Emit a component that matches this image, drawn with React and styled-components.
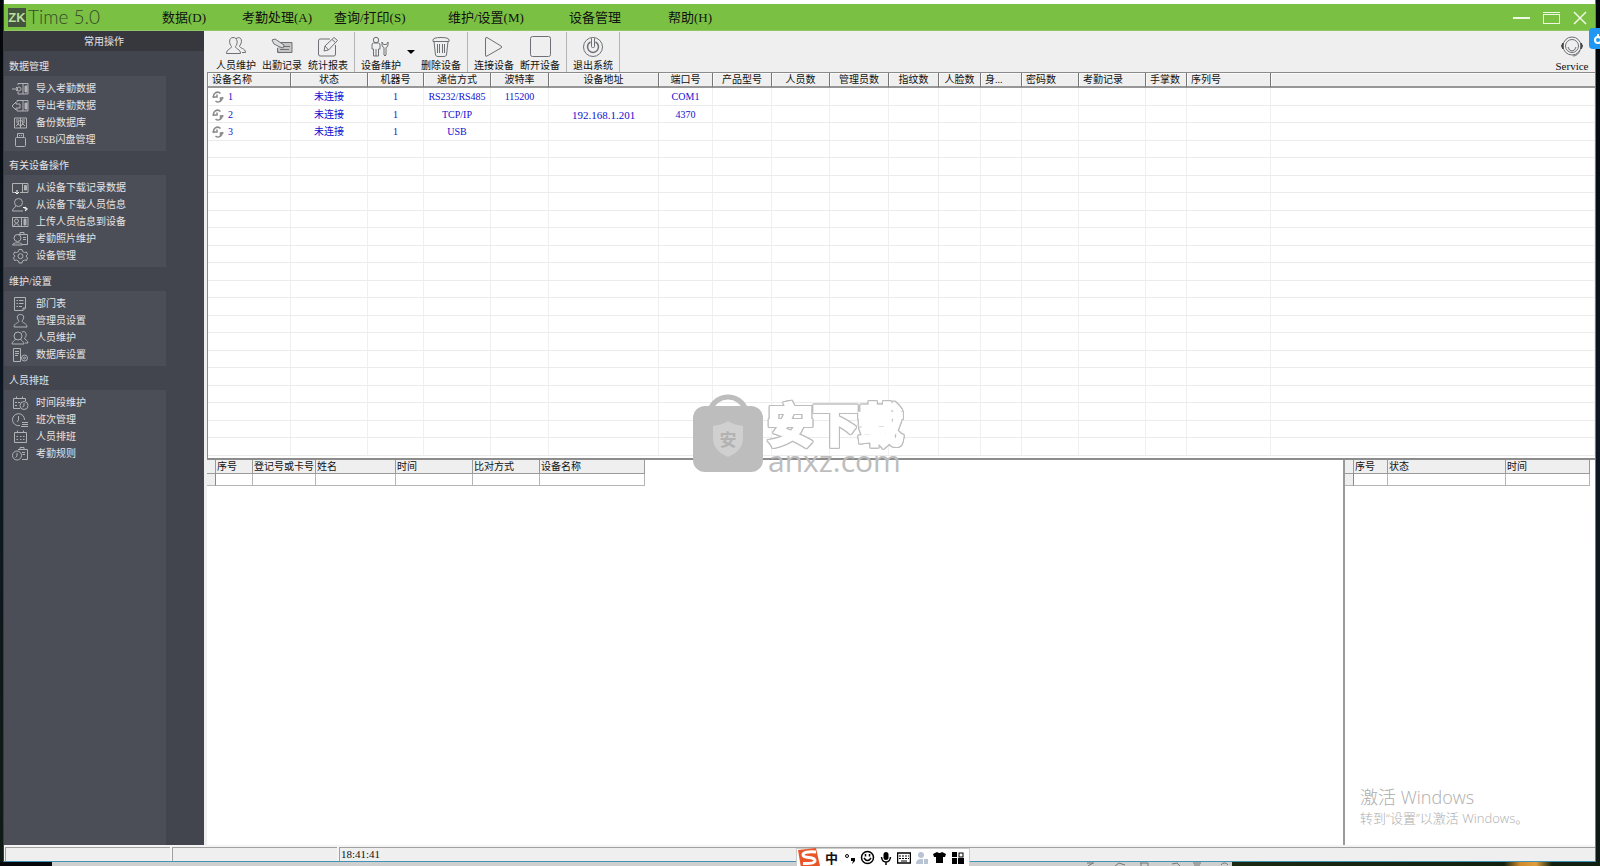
import React from 'react';
import styled, { createGlobalStyle } from 'styled-components';

const GlobalStyle = createGlobalStyle`
  *, *::before, *::after { box-sizing: border-box; }
  body {
    margin: 0;
    font: 10px/12px "Liberation Serif", "Noto Sans CJK SC", serif;
    color: #111;
    background: #06090f;
  }
  button { font: inherit; color: inherit; background: none; border: 0; padding: 0; margin: 0; white-space: nowrap; }
  table { border-collapse: separate; border-spacing: 0; table-layout: fixed; }
  th { font-weight: normal; }
  h1, h2, ul { margin: 0; padding: 0; font: inherit; list-style: none; }
`;

/* ---------- shell ---------- */

const Desktop = styled.div`
  position: relative;
  display: flex;
  flex-direction: column;
  height: 100vh;
  overflow: hidden;
  background: linear-gradient(#03060a, #0d1722 50%, #101a14);
`;

const Window = styled.div`
  flex: 1;
  min-height: 0;
  margin: 0 4px 0 3px;
  display: flex;
  flex-direction: column;
  background: #fff;
  border-left: 1px solid #1d3f6e;
  border-right: 1px solid #4a86a8;
  border-bottom: 1px solid #3f93b5;
  padding-top: 4px;
`;

const TitleBar = styled.header`
  flex: none;
  display: flex;
  align-items: center;
  height: 27px;
  background: #7ac143;
  border-bottom: 1px solid #8fc767;
`;

const Brand = styled.h1`
  display: flex;
  align-items: center;
  width: 158px;
  padding-left: 4px;
  gap: 2px;
`;

const BrandMark = styled.span`
  width: 18px;
  height: 19px;
  background: #43533d;
  color: #b9dd9b;
  font: 700 13px/19px "Liberation Sans", sans-serif;
  text-align: center;
`;

const BrandName = styled.span`
  font: 300 19px/24px Lato, sans-serif;
  color: #34492a;
`;

const Menu = styled.nav`
  flex: 1;
  display: grid;
  grid-template-columns: 80px 92px 114px 121px 99px 60px;
  justify-items: start;
  padding-top: 2px;
  font-size: 13px;
  line-height: 20px;
`;

const WindowControls = styled.div`
  display: flex;
  align-items: center;
  gap: 13px;
  padding: 1px 8px 0 0;
  button { display: flex; }
`;

const Body = styled.div`
  flex: 1;
  min-height: 0;
  display: flex;
`;

/* ---------- sidebar ---------- */

const Sidebar = styled.aside`
  flex: none;
  width: 200px;
  display: flex;
  flex-direction: column;
  background: #43454e;
  color: #e4e4e6;
`;

const SidebarTitle = styled.h2`
  height: 20px;
  line-height: 21px;
  text-align: center;
  background: #37383e;
  margin-bottom: 1px;
`;

const GroupTitle = styled.h2`
  height: 24px;
  line-height: 20px;
  padding: 5px 0 0 5px;
`;

const GroupList = styled.ul`
  flex: ${(p) => (p.$fill ? '1' : 'none')};
  width: 162px;
  padding: 4px 0 3px 7px;
  background: #4c4e57;
`;

const SideItem = styled.button`
  display: flex;
  align-items: center;
  gap: 7px;
  height: 17px;
  line-height: 17px;
`;

/* ---------- toolbar ---------- */

const Content = styled.main`
  flex: 1;
  min-width: 0;
  display: flex;
  flex-direction: column;
`;

const Toolbar = styled.div`
  flex: none;
  display: flex;
  height: 41px;
  padding: 0 0 0 9px;
  background: #efefef;
`;

const ToolButton = styled.button`
  display: flex;
  flex-direction: column;
  align-items: center;
  gap: 2px;
  width: 46px;
  padding-top: 5px;
  margin-left: ${(p) => (p.$end ? 'auto' : '0')};
  font-size: ${(p) => (p.$end ? '11px' : '10px')};
`;

const DropButton = styled.button`
  width: 14px;
  display: flex;
  align-items: center;
  justify-content: center;
`;

const Separator = styled.span`
  width: 1px;
  margin: 1px 3px 0 3px;
  background: #b4b4b4;
`;

/* ---------- tables ---------- */

const Panes = styled.div`
  flex: 1;
  min-height: 0;
  display: flex;
  flex-direction: column;
  border-left: 3px solid #efefef;
`;

const DevicePane = styled.section`
  flex: none;
  border-top: 1px solid #8a8a8a;
  border-left: 1px solid #8a8a8a;
  border-bottom: 2px solid #8c8c8c;
  padding-bottom: 2px;
`;

const DeviceTable = styled.table`
  width: 100%;
`;

const DeviceHead = styled.th`
  height: 15px;
  padding: 1px 4px 0;
  overflow: hidden;
  white-space: nowrap;
  text-align: ${(p) => (p.$left ? 'left' : 'center')};
  background: #efefef;
  border-right: ${(p) => (p.$last ? '0' : '1px solid #777')};
  border-bottom: 2px solid #979797;
  box-shadow: inset 1px 1px #fafafa;
`;

const DeviceRow = styled.tr`
  height: 18px;
  &:nth-child(even) { height: 17px; }
`;

const DeviceCell = styled.td`
  padding: 1px 4px 0;
  white-space: nowrap;
  text-align: center;
  font-size: ${(p) => (p.$address ? '11px' : '10px')};
  color: #1010d0;
  border-right: 1px solid #f0f0f0;
  border-bottom: 1px solid #ececec;
`;

const DeviceName = styled.span`
  display: flex;
  align-items: center;
  gap: 4px;
`;

const LowerPanes = styled.div`
  flex: 1;
  min-height: 0;
  display: flex;
`;

const LogPane = styled.section`
  flex: ${(p) => (p.$width ? `0 0 ${p.$width}px` : '1')};
  min-width: 0;
  border-left: ${(p) => (p.$width ? '2px solid #999' : '0')};
`;

const LogTable = styled.table`
  width: ${(p) => p.$width}px;
  th, td {
    padding: 0 0 0 1px;
    text-align: left;
    white-space: nowrap;
    border-right: 1px solid #b5b5b5;
    border-bottom: 1px solid #b5b5b5;
  }
  th { height: 14px; background: #efefef; border-color: #9a9a9a; }
  td { height: 12px; }
  td:first-child { background: #efefef; border-right-color: #8a8a8a; }
`;

/* ---------- status bar ---------- */

const StatusBar = styled.footer`
  flex: none;
  display: flex;
  gap: 2px;
  height: 16px;
  padding: 2px 0 0 1px;
  background: #f4f4f4;
`;

const StatusCell = styled.div`
  flex: ${(p) => (p.$grow ? '1' : '0 0 165px')};
  padding-left: 1px;
  font-size: 11px;
  line-height: 13px;
  background: #efefef;
  border-top: 1px solid #a0a0a0;
  border-left: 1px solid #a0a0a0;
`;

const Taskbar = styled.div`
  flex: none;
  display: flex;
  justify-content: flex-end;
  align-items: flex-start;
  height: 4px;
  overflow: hidden;
  background: linear-gradient(90deg, #05070a 52px, #cfcfcf 52px, #cfcfcf 77%, #1c2a12 77%, #12200f 94%, #d08a2c 95%, #e0a040 96%, #12200f 97%);
`;

/* ---------- overlays ---------- */

const ImeBar = styled.div`
  position: absolute;
  bottom: 0;
  left: 50%;
  margin-left: -4px;
  display: flex;
  align-items: center;
  gap: 3px;
  height: 18px;
  padding: 0 4px 0 0;
  background: #fff;
  border: 1px solid #ccc;
  border-bottom: 0;
  button { display: flex; width: 15px; justify-content: center; font: 700 13px/16px "Noto Sans CJK SC", sans-serif; }
`;

const EdgeBadge = styled.button`
  position: absolute;
  right: 0;
  top: 28px;
  width: 11px;
  height: 21px;
  background: #2196f3;
  border-radius: 4px 0 0 4px;
  overflow: hidden;
`;

const Watermark = styled.div`
  position: absolute;
  inset: 0;
  display: flex;
  align-items: center;
  justify-content: center;
  gap: 5px;
  padding: 0 4px 4px 0;
  pointer-events: none;
`;

const WatermarkText = styled.div`
  padding-top: 8px;
  color: #bdbdbd;
  font: 400 30px/24px "Open Sans", sans-serif;
`;

const WatermarkTitle = styled.div`
  font: 500 45px/52px "Noto Sans CJK SC", sans-serif;
  color: #fff;
  -webkit-text-stroke: 4px #fff;
  paint-order: stroke fill;
  filter: drop-shadow(1px 0 #bdbdbd) drop-shadow(-1px 0 #bdbdbd) drop-shadow(0 1px #bdbdbd) drop-shadow(0 -1px #bdbdbd);
`;

const Activation = styled.div`
  position: absolute;
  right: 72px;
  bottom: 38px;
  width: 168px;
  color: #adadad;
  font: 300 13px/20px "Open Sans", "Noto Sans CJK SC", sans-serif;
  white-space: nowrap;
  pointer-events: none;
  strong { display: block; font-size: 18px; line-height: 22px; font-weight: 300; }
`;

/* ---------- drawings ---------- */

const sideDrawings = {
  import: <><path d="M7 4V2.500H17V13H7V10.500M1 8H7M5 6L7 8L5 10" /><circle cx="8" cy="8" r="2" /><path d="M12 3V13" /><path d="M14 5H16V11H14Z" fill="currentColor" /></>,
  export: <><path d="M6 4V2.500H17V13H6V11M9 6V10H5V12L1 8L5 4V6Z" /><path d="M12 3V13" /><path d="M14 5H16V11H14Z" fill="currentColor" /></>,
  backup: <><path d="M3.500 3H15.500V13H3.500Z M9.500 3V13" /><path d="M5 5H8M5 7H7M5 11L8 8M11 5H14M12 7H14M11 8L14 11" /><circle cx="9.500" cy="8" r="2.500" /></>,
  usb: <><rect x="4.500" y="5.500" width="10" height="9" rx="1" /><path d="M6.500 5V1.500H12.500V5M8.500 3V4M10.500 3V4" /></>,
  download: <><path d="M4 12.500H1.500V3.500H17V12.500H9M11.500 3V12" /><path d="M13.500 5.500H15.500V10H13.500Z" fill="currentColor" /><path d="M6 10V14M4 12L6 14L8 12" stroke="#fff" /></>,
  userDown: <><circle cx="7.500" cy="5.500" r="4" /><path d="M5 9C4 11 1.500 11 1.500 14H12" /><path d="M12 10.500H14V12H16M14 10L16.500 12L14 14" stroke="#fff" /></>,
  upload: <><path d="M1.500 3.500H17V12.500H1.500ZM10.500 3V13" /><circle cx="5.500" cy="7" r="2" /><path d="M3 12C3 9 8 9 8 12" /><path d="M13 5H15V11H13Z" fill="currentColor" /></>,
  photo: <><path d="M7 3.500H16.500V13.500H11M9 3V1.500H13V3M12 6.500H15M12 8.500H15" /><circle cx="6.500" cy="7" r="3.500" /><path d="M1.500 14C2 11 11 11 11.500 14Z" /></>,
  gear: <><path d="M8 1.500H11L11.500 3.500L13.500 4.500L15.500 4L16.500 6.500L15 8L16.500 10L15.500 12.500L13.500 12L11.500 13L11 15H8L7.500 13L5.500 12L3.500 12.500L2.500 10L4 8L2.500 6.500L3.500 4L5.500 4.500L7.500 3.500Z" /><circle cx="9.500" cy="8.200" r="2.500" /></>,
  list: <path d="M3.500 1.500H14.500V12L12 14.500H3.500ZM12 14.500V12H14.500M5.500 4.500H7M8 4.500H12.500M5.500 7.500H7M8 7.500H12.500M5.500 10.500H7M8 10.500H11" />,
  admin: <path d="M9.500 1.500C5 1.500 6 6 8 8C8 10 3 10 3 14H16C16 10 11 10 11 8C13 6 14 1.500 9.500 1.500Z" />,
  users: <><circle cx="7" cy="6" r="4" /><path d="M4.500 9C4 11 1 11 1 14H13C13 11 10 11 9.500 9M11 2C16 0 16 7 13.500 8C13.500 10 17 10 17 13H14" /></>,
  server: <><path d="M2.500 1.500H9.500V14.500H2.500ZM4 4.500H8M4 6.500H8M4 8.500H7" /><circle cx="13.500" cy="11" r="3" /><circle cx="13.500" cy="11" r="1" /></>,
  period: <><path d="M9 13.500H2.500V3.500H14.500V6M5.500 1.500V4M11.500 1.500V4M4 7.500H6M7 7.500H9M4 10.500H6" /><circle cx="13" cy="10.500" r="4" /><path d="M13 8V11L11.500 12" /></>,
  shift: <path d="M9 13.500A6 6 0 1 1 13.500 8M7.500 4V8L6 10M11 10.500H17M11 12.500H17M10 14.500H17" />,
  calendar: <path d="M3.500 3.500H15.500V13.500H3.500ZM6.500 1.500V4M12.500 1.500V4M5.500 7.500H7M9 7.500H10.500M12 7.500H13.500M5.500 10.500H7M9 10.500H10.500M12 10.500H13.500" />,
  rules: <><path d="M7 3.500H16.500V13.500H11M9 3V1.500H13V3M11 6.500H14M11.500 8.500H14" /><circle cx="6" cy="9.500" r="4.500" /><path d="M6 7V10L4.500 11.500" /></>,
};

const SideIcon = ({ name }) => (
  <svg width="18" height="16" viewBox="0 0 18 16" fill="none" stroke="currentColor" color="#b0b2b6" aria-hidden="true">
    {sideDrawings[name]}
  </svg>
);

const toolDrawings = {
  people: <><path d="M8 1.500C3.500 1.500 4 8 6.500 10.500C6.500 13 1.500 13 1.500 17.500H15.500C15.500 13 10.500 13 10.500 10.500C13 8 13 1.500 8 1.500Z" /><path d="M11 2.500C17 -0.500 18 6 14.500 10C14.500 12.500 20.500 12 20.500 16.500H17" /></>,
  card: <><path d="M8 6.500H21V16.500H6.500V12" fill="#c4c4c4" /><path d="M9 13.500H18M12 10.500H19" /><path d="M1 4L4 3L13 9L12 12L9 11L3 8Z" fill="#ddd" /><path d="M6 15L9 17" /></>,
  report: <><path d="M13 3H3Q1.500 3 1.500 5V18Q1.500 20 3 20H17Q18.500 20 18.500 18V9" /><path d="M7 15L8 10L17 1.500L20.500 4.500L11.500 14ZM15 3.500L18.500 6.500M8 10L11.500 14" /></>,
  maintain: <><circle cx="6" cy="4" r="2.700" /><path d="M3.500 7H8.500Q10 7 10 9V13H8.500V20H3.500V13H2V9Q2 7 3.500 7ZM6 13V20" /><path d="M12 6V9Q12 11 14 11.500V19Q15 21 16 19V11.500Q18 11 18 9V6L16.500 8.500H13.500Z" /></>,
  trash: <><path d="M3 4Q3 1.500 11 1.500T19 4V5.500H3ZM4 5.500L5.500 19Q6 20.500 8 20.500H14Q16 20.500 16.500 19L18 5.500" /><path d="M7.500 8V17M9.500 8V17M12.500 8V17M14.500 8V17" /></>,
  play: <path d="M2.500 3Q2.500 1 4 1.500L18 10Q19.500 11 18 12L4 20Q2.500 21 2.500 19Z" />,
  stop: <rect x="1.500" y="0.500" width="20" height="20" rx="2" />,
  power: <><circle cx="11" cy="11" r="9.500" /><path d="M8.500 6A5.500 5.500 0 1 0 13.500 6" strokeWidth="1.500" /><rect x="9.500" y="1.500" width="3" height="10" rx="1" fill="#efefef" /></>,
  service: <><circle cx="11" cy="10" r="9" /><circle cx="11" cy="10" r="6.500" /><path d="M7 11Q8 15 11 15T15 11M19 14Q17 20 12 20" /><path d="M2 7Q-1 10 2 13ZM20 7Q23 10 20 13Z" fill="#444" stroke="#444" /></>,
};

const ToolIcon = ({ name }) => (
  <svg width="22" height="22" viewBox="0 0 22 22" fill="none" stroke="#6e7075" aria-hidden="true">
    {toolDrawings[name]}
  </svg>
);

const SyncIcon = () => (
  <svg width="12" height="12" viewBox="0 0 12 12" fill="none" stroke="#8a8a8a" strokeWidth="1.500" aria-hidden="true">
    <path d="M8.500 2.500A4 4 0 0 0 2 7M3.500 10A4 4 0 0 0 10 6" />
    <path d="M0.500 6H5V3.500M11.500 7H8.500V10" />
  </svg>
);

/* ---------- data ---------- */

const menus = ['数据(D)', '考勤处理(A)', '查询/打印(S)', '维护/设置(M)', '设备管理', '帮助(H)'];

const groups = [
  ['数据管理', [['import', '导入考勤数据'], ['export', '导出考勤数据'], ['backup', '备份数据库'], ['usb', 'USB闪盘管理']]],
  ['有关设备操作', [['download', '从设备下载记录数据'], ['userDown', '从设备下载人员信息'], ['upload', '上传人员信息到设备'], ['photo', '考勤照片维护'], ['gear', '设备管理']]],
  ['维护/设置', [['list', '部门表'], ['admin', '管理员设置'], ['users', '人员维护'], ['server', '数据库设置']]],
  ['人员排班', [['period', '时间段维护'], ['shift', '班次管理'], ['calendar', '人员排班'], ['rules', '考勤规则']]],
];

const deviceColumns = [
  ['设备名称', 83, true], ['状态', 77], ['机器号', 56], ['通信方式', 67], ['波特率', 58], ['设备地址', 110],
  ['端口号', 54], ['产品型号', 59], ['人员数', 58], ['管理员数', 59], ['指纹数', 50], ['人脸数', 42],
  ['身...', 41, true], ['密码数', 57, true], ['考勤记录', 67, true], ['手掌数', 41, true], ['序列号', 84, true],
];

const ADDRESS_COLUMN = 5;

const devices = [
  ['1', '未连接', '1', 'RS232/RS485', '115200', '', 'COM1'],
  ['2', '未连接', '1', 'TCP/IP', '', '192.168.1.201', '4370'],
  ['3', '未连接', '1', 'USB'],
];

const ROW_COUNT = 21;

const recordColumns = [['', 9], ['序号', 37], ['登记号或卡号', 63], ['姓名', 80], ['时间', 77], ['比对方式', 67], ['设备名称', 105]];
const stateColumns = [['', 9], ['序号', 34], ['状态', 118], ['时间', 84]];

function Log({ columns }) {
  return (
    <LogTable $width={columns.reduce((sum, c) => sum + c[1], 0)}>
      <colgroup>{columns.map(([name, w]) => <col key={name} style={{ width: w }} />)}</colgroup>
      <thead><tr>{columns.map(([name]) => <th key={name}>{name}</th>)}</tr></thead>
      <tbody><tr>{columns.map(([name]) => <td key={name} />)}</tr></tbody>
    </LogTable>
  );
}

function Tool({ icon, children, end }) {
  return <ToolButton type="button" $end={end}><ToolIcon name={icon} />{children}</ToolButton>;
}

function Devices() {
  return (
    <DevicePane>
      <DeviceTable>
        <colgroup>
          {deviceColumns.map(([name, w]) => <col key={name} style={{ width: w }} />)}
          <col />
        </colgroup>
        <thead>
          <tr>
            {deviceColumns.map(([name, , left]) => <DeviceHead key={name} $left={left}>{name}</DeviceHead>)}
            <DeviceHead $last />
          </tr>
        </thead>
        <tbody>
          {Array.from({ length: ROW_COUNT }, (_, r) => (
            <DeviceRow key={r}>
              {Array.from({ length: deviceColumns.length + 1 }, (_, c) => {
                const value = devices[r]?.[c];
                return (
                  <DeviceCell key={c} $address={c === ADDRESS_COLUMN}>
                    {value && c === 0 ? <DeviceName><SyncIcon />{value}</DeviceName> : value}
                  </DeviceCell>
                );
              })}
            </DeviceRow>
          ))}
        </tbody>
      </DeviceTable>
    </DevicePane>
  );
}

export default function App() {
  return (
    <Desktop>
      <GlobalStyle />
      <Window>
        <TitleBar>
          <Brand><BrandMark>ZK</BrandMark><BrandName>Time 5.0</BrandName></Brand>
          <Menu>{menus.map((m) => <button type="button" key={m}>{m}</button>)}</Menu>
          <WindowControls>
            <button type="button" aria-label="最小化">
              <svg width="17" height="14" stroke="#eef8e6" fill="none"><path d="M0 7H17" strokeWidth="2" /></svg>
            </button>
            <button type="button" aria-label="最大化">
              <svg width="17" height="14" stroke="#eef8e6" fill="none"><path d="M0 1.500H17" /><rect x="0.500" y="3.500" width="16" height="9" /></svg>
            </button>
            <button type="button" aria-label="关闭">
              <svg width="14" height="14" stroke="#eef8e6" fill="none" strokeWidth="1.500"><path d="M1 1L13 13M13 1L1 13" /></svg>
            </button>
          </WindowControls>
        </TitleBar>

        <Body>
          <Sidebar>
            <SidebarTitle>常用操作</SidebarTitle>
            {groups.map(([title, items], i) => (
              <React.Fragment key={title}>
                <GroupTitle>{title}</GroupTitle>
                <GroupList $fill={i === groups.length - 1}>
                  {items.map(([icon, label]) => (
                    <li key={label}><SideItem type="button"><SideIcon name={icon} />{label}</SideItem></li>
                  ))}
                </GroupList>
              </React.Fragment>
            ))}
          </Sidebar>

          <Content>
            <Toolbar>
              <Tool icon="people">人员维护</Tool>
              <Tool icon="card">出勤记录</Tool>
              <Tool icon="report">统计报表</Tool>
              <Separator />
              <Tool icon="maintain">设备维护</Tool>
              <DropButton type="button" aria-label="更多">
                <svg width="8" height="4"><path d="M0 0H8L4 4Z" /></svg>
              </DropButton>
              <Tool icon="trash">删除设备</Tool>
              <Separator />
              <Tool icon="play">连接设备</Tool>
              <Tool icon="stop">断开设备</Tool>
              <Separator />
              <Tool icon="power">退出系统</Tool>
              <Separator />
              <Tool icon="service" end>Service</Tool>
            </Toolbar>
            <Panes>
              <Devices />
              <LowerPanes>
                <LogPane><Log columns={recordColumns} /></LogPane>
                <LogPane $width={252}><Log columns={stateColumns} /></LogPane>
              </LowerPanes>
            </Panes>
          </Content>
        </Body>

        <StatusBar>
          <StatusCell />
          <StatusCell />
          <StatusCell $grow>18:41:41</StatusCell>
        </StatusBar>
      </Window>

      <Taskbar>
        <svg width="515" height="4" fill="none" stroke="#777" aria-hidden="true">
          <path d="M2 1H9M3 4L8 1M30 4L34 1L40 3M55 1H63V4M56 1V4M87 2L92 1L95 4M108 1H116M109 3H115M136 3A4 4 0 0 1 143 3" />
        </svg>
      </Taskbar>

      <Watermark>
        <svg width="70" height="82" viewBox="0 0 70 82" aria-hidden="true">
          <path d="M17 20A19 19 0 0 1 53 20" fill="none" stroke="#bdbdbd" strokeWidth="5" />
          <rect y="16" width="70" height="66" rx="12" fill="#bdbdbd" />
          <path d="M20 36Q29 35 35 31Q41 35 50 36V50Q49 61 35 67Q21 61 20 50Z" fill="#d0d0d0" />
          <text x="35" y="56" fontSize="17" fontWeight="700" fontFamily="Noto Sans CJK SC" textAnchor="middle" fill="#b2b2b2">安</text>
        </svg>
        <WatermarkText><WatermarkTitle>安下载</WatermarkTitle>anxz.com</WatermarkText>
      </Watermark>

      <Activation><strong>激活 Windows</strong>转到“设置”以激活 Windows。</Activation>

      <EdgeBadge type="button" aria-label="云">
        <svg width="11" height="21" fill="none" stroke="#fff" strokeWidth="2"><circle cx="9" cy="12" r="3" /><path d="M9 6V9" /></svg>
      </EdgeBadge>

      <ImeBar>
        <svg width="24" height="20" viewBox="0 0 24 20" aria-hidden="true">
          <path d="M1 2L19 0L23 18L4 20Z" fill="#e8562a" />
          <path d="M19 4Q6 3 6 7Q6 9 12 9.500T18 13Q17 16 6 15.500" fill="none" stroke="#fff" strokeWidth="3" />
        </svg>
        <button type="button">中</button>
        <button type="button" aria-label="标点">
          <svg width="12" height="14"><circle cx="3" cy="5" r="1.500" fill="none" stroke="#000" /><path d="M7 7H11V10L8 13L9 10H7Z" /></svg>
        </button>
        <button type="button" aria-label="表情">
          <svg width="15" height="15" fill="none" stroke="#000" strokeWidth="1.500"><circle cx="7.500" cy="7.500" r="6" /><path d="M4 8Q7.500 13 11 8M5.500 4V6.500M9.500 4V6.500" /></svg>
        </button>
        <button type="button" aria-label="语音">
          <svg width="12" height="14"><rect x="3.500" y="1" width="5" height="8" rx="2.500" /><path d="M1.500 6Q2 11 6 11T10.500 6M6 11V14" fill="none" stroke="#000" strokeWidth="1.500" /></svg>
        </button>
        <button type="button" aria-label="键盘">
          <svg width="14" height="12" fill="none" stroke="#000"><rect x="0.500" y="1" width="13" height="10" strokeWidth="1.500" /><path d="M2 4H12M2 6.500H12" strokeDasharray="2 1" /><path d="M4 9H10" /></svg>
        </button>
        <button type="button" aria-label="用户">
          <svg width="12" height="14" fill="#b8c4d4"><circle cx="5" cy="4" r="3" /><path d="M0 13Q0 8 5 8H7V13ZM8 8H12V13H8Z" /></svg>
        </button>
        <button type="button" aria-label="皮肤">
          <svg width="13" height="13"><path d="M0 3L4 1Q6.500 3 9 1L13 3L12 6H10V12H3V6H1Z" /></svg>
        </button>
        <button type="button" aria-label="工具箱">
          <svg width="12" height="12"><path d="M0 0H5V5H0ZM0 6H5V12H0ZM6 6H12V12H6Z" /><rect x="7" y="1" width="4" height="4" fill="none" stroke="#000" /></svg>
        </button>
      </ImeBar>
    </Desktop>
  );
}
